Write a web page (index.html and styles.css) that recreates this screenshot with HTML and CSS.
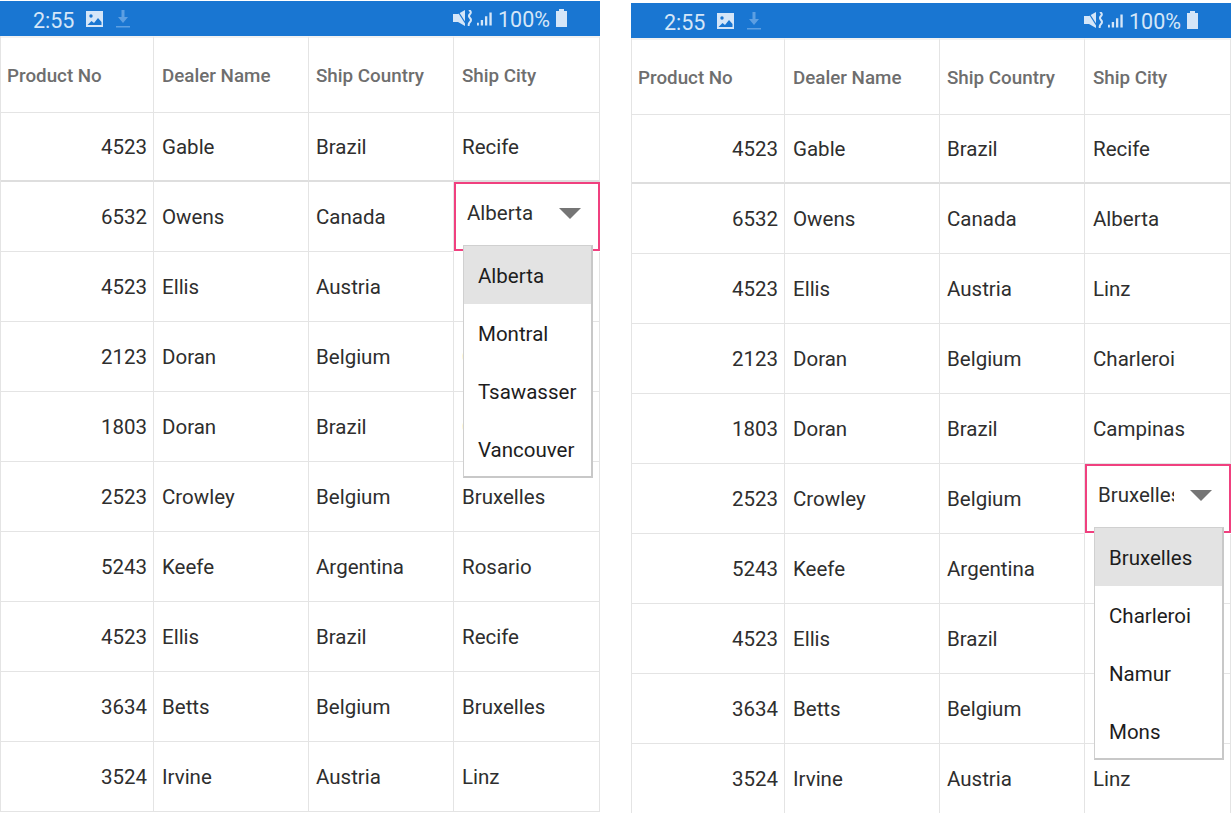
FILE: index.html
```html
<!DOCTYPE html>
<html lang="en">
<head>
<meta charset="utf-8">
<title>Data grid dropdown editor</title>
<link rel="stylesheet" href="styles.css">
</head>
<body>
<div class="page">
<section class="phone phone-a">
  <div class="status">
    <span class="time">2:55</span>
    <svg class="ic-img" viewBox="0 0 17 16"><path fill="#d5e6f8" d="M0 0h17v16H0z"/><circle cx="5" cy="5" r="1.7" fill="#1976d2"/><path fill="#1976d2" d="M1.500 14l4-4 2.500 2 4-5 3.500 4v3z"/></svg>
    <svg class="ic-dl" viewBox="0 0 14 18"><path fill="#5d9fe2" d="M5.500 0h3v7H12l-5 6-5-6h3.500zM0 16h14v1.500H0z"/></svg>
    <span class="spacer"></span>
    <svg class="ic-mute" viewBox="0 0 20 16"><path fill="#d5e6f8" d="M0 4h5l7-4v16l-7-4H0z"/><path stroke="#1976d2" stroke-width="1.200" d="M4 0l9 14" fill="none"/><path stroke="#d5e6f8" stroke-width="2" fill="none" d="M16 0q3 2 1 4t0 4 0 4 -1 4"/></svg>
    <svg class="ic-sig" viewBox="0 0 16 14"><path fill="#d5e6f8" d="M0 11h2v3H0zM4 8h2.500v6H4zM8.500 4H11v10H8.500zM13.200 0h2.500v14h-2.500z"/></svg>
    <span class="pct">100%</span>
    <svg class="ic-bat" viewBox="0 0 11 18"><path fill="#d5e6f8" d="M3 0h5v2h3v16H0V2h3z"/></svg>
  </div>
  <div class="grid">
    <div class="cell head">Product No</div><div class="cell head">Dealer Name</div><div class="cell head">Ship Country</div><div class="cell head">Ship City</div>
    <div class="cell num strong">4523</div><div class="cell strong">Gable</div><div class="cell strong">Brazil</div><div class="cell strong">Recife</div>
    <div class="cell num">6532</div><div class="cell">Owens</div><div class="cell">Canada</div><div class="cell editor"><span class="val">Alberta</span><i class="arrow"></i></div>
    <div class="cell num">4523</div><div class="cell">Ellis</div><div class="cell">Austria</div><div class="cell">Linz</div>
    <div class="cell num">2123</div><div class="cell">Doran</div><div class="cell">Belgium</div><div class="cell">Charleroi</div>
    <div class="cell num">1803</div><div class="cell">Doran</div><div class="cell">Brazil</div><div class="cell">Campinas</div>
    <div class="cell num">2523</div><div class="cell">Crowley</div><div class="cell">Belgium</div><div class="cell">Bruxelles</div>
    <div class="cell num">5243</div><div class="cell">Keefe</div><div class="cell">Argentina</div><div class="cell">Rosario</div>
    <div class="cell num">4523</div><div class="cell">Ellis</div><div class="cell">Brazil</div><div class="cell">Recife</div>
    <div class="cell num">3634</div><div class="cell">Betts</div><div class="cell">Belgium</div><div class="cell">Bruxelles</div>
    <div class="cell num">3524</div><div class="cell">Irvine</div><div class="cell">Austria</div><div class="cell">Linz</div>
  </div>
  <ul class="menu menu-a">
    <li class="sel">Alberta</li><li>Montral</li><li>Tsawasser</li><li>Vancouver</li>
  </ul>
</section>
<section class="phone phone-b">
  <div class="status">
    <span class="time">2:55</span>
    <svg class="ic-img" viewBox="0 0 17 16"><path fill="#d5e6f8" d="M0 0h17v16H0z"/><circle cx="5" cy="5" r="1.7" fill="#1976d2"/><path fill="#1976d2" d="M1.500 14l4-4 2.500 2 4-5 3.500 4v3z"/></svg>
    <svg class="ic-dl" viewBox="0 0 14 18"><path fill="#5d9fe2" d="M5.500 0h3v7H12l-5 6-5-6h3.500zM0 16h14v1.500H0z"/></svg>
    <span class="spacer"></span>
    <svg class="ic-mute" viewBox="0 0 20 16"><path fill="#d5e6f8" d="M0 4h5l7-4v16l-7-4H0z"/><path stroke="#1976d2" stroke-width="1.200" d="M4 0l9 14" fill="none"/><path stroke="#d5e6f8" stroke-width="2" fill="none" d="M16 0q3 2 1 4t0 4 0 4 -1 4"/></svg>
    <svg class="ic-sig" viewBox="0 0 16 14"><path fill="#d5e6f8" d="M0 11h2v3H0zM4 8h2.500v6H4zM8.500 4H11v10H8.500zM13.200 0h2.500v14h-2.500z"/></svg>
    <span class="pct">100%</span>
    <svg class="ic-bat" viewBox="0 0 11 18"><path fill="#d5e6f8" d="M3 0h5v2h3v16H0V2h3z"/></svg>
  </div>
  <div class="grid">
    <div class="cell head">Product No</div><div class="cell head">Dealer Name</div><div class="cell head">Ship Country</div><div class="cell head">Ship City</div>
    <div class="cell num strong">4523</div><div class="cell strong">Gable</div><div class="cell strong">Brazil</div><div class="cell strong">Recife</div>
    <div class="cell num">6532</div><div class="cell">Owens</div><div class="cell">Canada</div><div class="cell">Alberta</div>
    <div class="cell num">4523</div><div class="cell">Ellis</div><div class="cell">Austria</div><div class="cell">Linz</div>
    <div class="cell num">2123</div><div class="cell">Doran</div><div class="cell">Belgium</div><div class="cell">Charleroi</div>
    <div class="cell num">1803</div><div class="cell">Doran</div><div class="cell">Brazil</div><div class="cell">Campinas</div>
    <div class="cell num">2523</div><div class="cell">Crowley</div><div class="cell">Belgium</div><div class="cell editor"><span class="val">Bruxelles</span><i class="arrow"></i></div>
    <div class="cell num">5243</div><div class="cell">Keefe</div><div class="cell">Argentina</div><div class="cell">Rosario</div>
    <div class="cell num">4523</div><div class="cell">Ellis</div><div class="cell">Brazil</div><div class="cell">Recife</div>
    <div class="cell num">3634</div><div class="cell">Betts</div><div class="cell">Belgium</div><div class="cell">Bruxelles</div>
    <div class="cell num">3524</div><div class="cell">Irvine</div><div class="cell">Austria</div><div class="cell">Linz</div>
  </div>
  <ul class="menu menu-b">
    <li class="sel">Bruxelles</li><li>Charleroi</li><li>Namur</li><li>Mons</li>
  </ul>
</section>
</div>
</body>
</html>
```
FILE: styles.css
```css
html, body {
  margin: 0;
  padding: 0;
  height: 813px;
  overflow: hidden;
  background: #fff;
}
.page {
  display: flex;
  gap: 31px;
  align-items: flex-start;
  font-family: Roboto, "Liberation Sans", sans-serif;
  color: #2e2e2e;
}
.phone {
  position: relative;
  width: 600px;
  flex: none;
}
.phone-a { margin-top: 1px; }
.phone-b { margin-top: 3px; }
.status {
  height: 35px;
  background: #1976d2;
  color: #d5e6f8;
  display: flex;
  align-items: center;
  padding: 3px 33px 0 33px;
  box-sizing: border-box;
}
.time { font-size: 21.500px; margin-right: 12px; }
.ic-img { width: 17px; height: 16px; margin-right: 13px; margin-top: -3px; }
.ic-dl { width: 14px; height: 18px; margin-top: -3px; }
.spacer { flex: 1; }
.ic-mute { width: 20px; height: 16px; margin-right: 4px; margin-top: -4px; }
.ic-sig { width: 15px; height: 14px; margin-right: 6px; margin-top: -2px; }
.pct { font-size: 21.500px; margin-right: 6px; margin-top: -1px; }
.ic-bat { width: 11px; height: 18px; margin-top: -4px; }
.grid {
  display: grid;
  grid-template-columns: 153px 155px 145px 146px;
  grid-template-rows: 77px 69px repeat(9, 70px);
  border-left: 1px solid #e4e4e4;
  box-sizing: border-box;
}
.cell {
  display: flex;
  align-items: center;
  box-sizing: border-box;
  padding-left: 8px;
  font-size: 20.500px;
  border-right: 1px solid #e4e4e4;
  border-bottom: 1px solid #e4e4e4;
  white-space: nowrap;
  overflow: hidden;
}
.cell:nth-child(4n+3) { padding-left: 7px; }
.head {
  font-weight: 500;
  font-size: 18.800px;
  color: #6e6e6e;
  border-top: 2px solid #f2f2f2;
  padding-top: 2px;
}
.grid .head:first-child { padding-left: 6px; }
.num {
  justify-content: flex-end;
  padding-left: 0;
  padding-right: 6px;
}
.strong { border-bottom: 2px solid #dedede; }
.editor {
  border: 2px solid #f0407f;
  margin: 0 0 1px 0;
  padding: 0 12px 7px 11px;
  justify-content: space-between;
  background: #fff;
  overflow: visible;
  z-index: 1;
}
.val {
  display: block;
  width: 76px;
  overflow: hidden;
}
.arrow {
  width: 0;
  height: 0;
  margin-right: 5px;
  border-left: 11px solid transparent;
  border-right: 11px solid transparent;
  border-top: 11px solid #757575;
  margin-top: 1px;
}
.menu {
  position: absolute;
  left: 463px;
  width: 130px;
  height: 233px;
  margin: 0;
  padding: 0;
  list-style: none;
  background: #fff;
  border: 1px solid #d0d0d0;
  border-right: 2px solid #c8c8c8;
  border-bottom: 2px solid #c8c8c8;
  box-sizing: border-box;
  overflow: hidden;
  z-index: 2;
  font-size: 20.500px;
  color: #1d1d1d;
}
.menu-a { top: 244px; }
.menu-b { top: 524px; }
.menu li {
  height: 58px;
  box-sizing: border-box;
  padding-top: 1px;
  display: flex;
  align-items: center;
  padding-left: 14px;
}
.menu .sel { background: #e3e3e3; }
```
